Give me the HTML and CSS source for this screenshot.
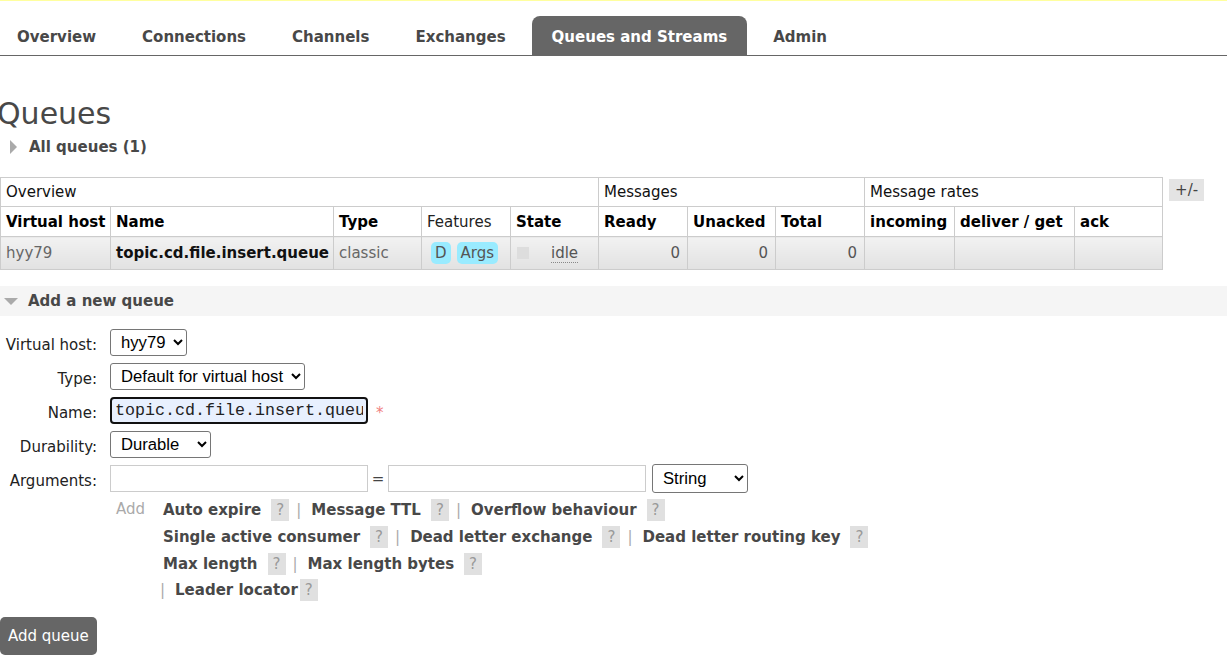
FILE: index.html
```html
<!DOCTYPE html>
<html>
<head>
<meta charset="utf-8">
<link rel="stylesheet" href="styles.css">
</head>
<body>
<div class="topline"></div>
<ul class="tabs">
  <li class="tab">Overview</li>
  <li class="tab">Connections</li>
  <li class="tab">Channels</li>
  <li class="tab">Exchanges</li>
  <li class="tab active">Queues and Streams</li>
  <li class="tab">Admin</li>
</ul>

<h1 class="title">Queues</h1>
<div class="section-head">
  <span class="tri-right"></span>
  <span class="sec-label">All queues (1)</span>
</div>

<div class="table-wrap">
  <table class="list">
    <colgroup>
      <col class="c1"><col class="c2"><col class="c3"><col class="c4"><col class="c5">
      <col class="c6"><col class="c7"><col class="c8"><col class="c9"><col class="c10"><col class="c11">
    </colgroup>
    <thead>
      <tr class="group-row">
        <th colspan="5">Overview</th>
        <th colspan="3">Messages</th>
        <th colspan="3">Message rates</th>
      </tr>
      <tr class="head-row">
        <th>Virtual host</th>
        <th>Name</th>
        <th>Type</th>
        <th class="plain">Features</th>
        <th>State</th>
        <th>Ready</th>
        <th>Unacked</th>
        <th>Total</th>
        <th>incoming</th>
        <th>deliver / get</th>
        <th>ack</th>
      </tr>
    </thead>
    <tbody>
      <tr class="data-row">
        <td class="muted">hyy79</td>
        <td class="qname">topic.cd.file.insert.queue</td>
        <td class="muted">classic</td>
        <td><span class="badge">D</span><span class="badge">Args</span></td>
        <td><span class="state-box"></span><span class="idle">idle</span></td>
        <td class="num">0</td>
        <td class="num">0</td>
        <td class="num">0</td>
        <td></td>
        <td></td>
        <td></td>
      </tr>
    </tbody>
  </table>
  <span class="toggle">+/-</span>
</div>

<div class="add-head">
  <span class="tri-down"></span>
  <span class="sec-label">Add a new queue</span>
</div>

<div class="form">
  <label class="lbl">Virtual host:</label>
  <div class="field">
    <select class="sel"><option>hyy79</option></select>
  </div>

  <label class="lbl">Type:</label>
  <div class="field">
    <select class="sel"><option>Default for virtual host</option><option>Classic</option><option>Quorum</option><option>Stream</option></select>
  </div>

  <label class="lbl">Name:</label>
  <div class="field">
    <input class="name-input" type="text" value="topic.cd.file.insert.queue"><span class="star">*</span>
  </div>

  <label class="lbl">Durability:</label>
  <div class="field">
    <select class="sel"><option>Durable</option><option>Transient</option></select>
  </div>

  <label class="lbl">Arguments:</label>
  <div class="field">
    <input class="arg-input" type="text"><span class="eq">=</span><input class="arg-input" type="text"><select class="sel sel-type"><option>String</option><option>Number</option><option>Boolean</option><option>List</option></select>
  </div>
</div>

<div class="helpers">
  <span class="add-link">Add</span>
  <div class="help-lines">
    <div class="hline"><b class="hl">Auto expire</b><span class="q">?</span><span class="sep">|</span><b class="hl">Message TTL</b><span class="q">?</span><span class="sep">|</span><b class="hl">Overflow behaviour</b><span class="q">?</span></div>
    <div class="hline"><b class="hl">Single active consumer</b><span class="q">?</span><span class="sep">|</span><b class="hl">Dead letter exchange</b><span class="q">?</span><span class="sep">|</span><b class="hl">Dead letter routing key</b><span class="q">?</span></div>
    <div class="hline"><b class="hl">Max length</b><span class="q">?</span><span class="sep">|</span><b class="hl">Max length bytes</b><span class="q">?</span></div>
    <div class="hline last"><span class="sep first">|</span><b class="hl tight">Leader locator</b><span class="q">?</span></div>
  </div>
</div>

<button class="add-btn">Add queue</button>
</body>
</html>
```

FILE: styles.css
```css
html, body {
  margin: 0;
  padding: 0;
  background: #fff;
}
body {
  font-family: "DejaVu Sans", Verdana, sans-serif;
  font-size: 15px;
  color: #484848;
  overflow: hidden;
  height: 655px;
}
.topline {
  height: 1px;
  background: #ffff9e;
}
.tabs {
  list-style: none;
  display: flex;
  gap: 6px;
  margin: 15px 0 0 -3px;
  padding: 0;
  border-bottom: 1px solid #666;
}
.tab {
  padding: 12px 20px 8px;
  line-height: 19px;
  font-weight: bold;
  color: #484848;
  border-radius: 8px 8px 0 0;
}
.tab.active {
  background: #666;
  color: #fff;
}
.title {
  margin: 40px 0 0 -3px;
  font-size: 30px;
  font-weight: normal;
  line-height: 36px;
  color: #484848;
}
.section-head {
  display: flex;
  align-items: center;
  height: 20px;
  margin-top: 5px;
}
.tri-right {
  width: 0;
  height: 0;
  border-top: 7px solid transparent;
  border-bottom: 7px solid transparent;
  border-left: 7px solid #aaa;
  margin: 0 12px 0 10px;
}
.sec-label {
  font-weight: bold;
  color: #484848;
}
.table-wrap {
  display: flex;
  align-items: flex-start;
  gap: 6px;
  margin-top: 20px;
}
.list {
  border-collapse: collapse;
  table-layout: fixed;
  width: 1163px;
  color: #000;
}
.c1 { width: 110px; }
.c2 { width: 223px; }
.c3 { width: 88px; }
.c4 { width: 89px; }
.c5 { width: 88px; }
.c6 { width: 89px; }
.c7 { width: 88px; }
.c8 { width: 89px; }
.c9 { width: 90px; }
.c10 { width: 120px; }
.c11 { width: 88px; }
.list th, .list td {
  border: 1px solid #ccc;
  text-align: left;
  padding: 0 5px;
  white-space: nowrap;
  overflow: hidden;
}
.group-row th {
  font-weight: normal;
  height: 28px;
  color: #111;
  padding-left: 5px;
}
.head-row th {
  height: 29px;
  font-weight: bold;
  color: #000;
}
.head-row th.plain {
  font-weight: normal;
  color: #222;
}
.data-row td {
  height: 32px;
  background: linear-gradient(#f2f2f2, #e2e2e2);
  color: #222;
}
.data-row td.muted {
  color: #666;
}
.data-row td.qname {
  font-weight: bold;
  color: #111;
}
.data-row td.num {
  text-align: right;
  padding-right: 7px;
  color: #555;
}
.badge {
  display: inline-block;
  background: #99ebff;
  color: #555;
  border-radius: 5px;
  padding: 2px 4px;
  line-height: 18px;
  margin-left: 4px;
}
.badge + .badge {
  margin-left: 6px;
}
.state-box {
  display: inline-block;
  width: 12px;
  height: 12px;
  background: #ddd;
  vertical-align: -1px;
  margin-left: 1px;
}
.idle {
  margin-left: 22px;
  color: #555;
  border-bottom: 1px dotted #888;
}
.toggle {
  margin-top: 2px;
  background: #e4e4e4;
  color: #444;
  padding: 2px 6px;
  line-height: 18px;
}
.add-head {
  display: flex;
  align-items: center;
  height: 30px;
  margin-top: 16px;
  background: #f5f5f5;
}
.tri-down {
  width: 0;
  height: 0;
  border-left: 7px solid transparent;
  border-right: 7px solid transparent;
  border-top: 7px solid #aaa;
  margin: 1px 10px 0 4px;
}
.form {
  display: grid;
  grid-template-columns: 97px auto;
  column-gap: 13px;
  row-gap: 7px;
  margin-top: 13px;
  align-items: center;
}
.lbl {
  text-align: right;
  color: #222;
  padding-top: 5px;
}
.field {
  display: flex;
  align-items: center;
  height: 27px;
}
.sel {
  font-family: "Liberation Sans", Arial, sans-serif;
  font-size: 16.67px;
  height: 27px;
  color: #000;
  background: #fff;
  border: 1px solid #767676;
  border-radius: 3px;
  padding: 0 4px 0 6px;
}
.name-input {
  box-sizing: border-box;
  width: 258px;
  height: 27px;
  font-family: "Liberation Mono", "Courier New", monospace;
  font-size: 16.67px;
  color: #222;
  background: #e8f0fe;
  border: 2px solid #111;
  border-radius: 4px;
  padding: 0 3px;
  outline: none;
}
.star {
  color: #f08080;
  margin-left: 8px;
  font-size: 15px;
  padding-top: 4px;
}
.arg-input {
  box-sizing: border-box;
  width: 258px;
  height: 27px;
  border: 1px solid #ccc;
  background: #fff;
  padding: 0 3px;
  margin: 0;
}
.eq {
  width: 20px;
  text-align: center;
  color: #444;
}
.sel-type {
  margin-left: 6px;
  width: 96px;
  height: 29px;
}
.helpers {
  display: flex;
  align-items: flex-start;
  margin-top: 7px;
  padding-left: 116px;
}
.add-link {
  color: #aaa;
  width: 47px;
  line-height: 22px;
  margin-top: -1px;
}
.help-lines {
  display: flex;
  flex-direction: column;
  gap: 5px;
}
.hline {
  display: flex;
  align-items: center;
  height: 22px;
}
.hline.last {
  margin-left: -3px;
  margin-top: -1px;
}
.hl {
  font-weight: bold;
  color: #484848;
}
.q {
  display: inline-block;
  background: #e0e0e0;
  color: #999;
  padding: 0 5px;
  line-height: 22px;
  margin-left: 10px;
}
.hl.tight + .q {
  margin-left: 2px;
}
.sep {
  color: #aaa;
  margin: 0 10px 0 7px;
}
.sep.first {
  margin: 0 10px 0 0;
}
.add-btn {
  display: block;
  margin-top: 16px;
  background: #666;
  color: #fff;
  border: none;
  border-radius: 5px;
  font-family: "DejaVu Sans", Verdana, sans-serif;
  font-size: 15px;
  height: 38px;
  padding: 0 8px;
}
```
